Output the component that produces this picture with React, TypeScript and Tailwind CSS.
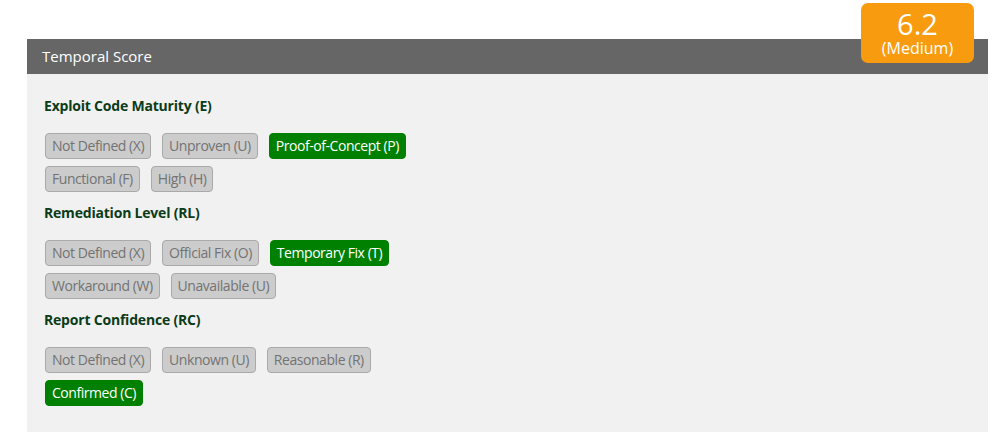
const groups = [
    {
        title: "Exploit Code Maturity (E)",
        rows: [
            [["Not Defined (X)", false], ["Unproven (U)", false], ["Proof-of-Concept (P)", true]],
            [["Functional (F)", false], ["High (H)", false]],
        ],
    },
    {
        title: "Remediation Level (RL)",
        rows: [
            [["Not Defined (X)", false], ["Official Fix (O)", false], ["Temporary Fix (T)", true]],
            [["Workaround (W)", false], ["Unavailable (U)", false]],
        ],
    },
    {
        title: "Report Confidence (RC)",
        rows: [
            [["Not Defined (X)", false], ["Unknown (U)", false], ["Reasonable (R)", false]],
            [["Confirmed (C)", true]],
        ],
    },
] as const;

function Option({ label, active }: { label: string; active: boolean }) {
    return (
        <button
            className={`h-[26px] px-[6px] rounded-[4px] border text-[14px] tracking-[-0.45px] leading-none ${
                active
                    ? "bg-[#008000] border-[#008000] text-white"
                    : "bg-[#cccccc] border-[#a9a9a9] text-[#737373]"
            }`}
        >
            {label}
        </button>
    );
}

export default function App() {
    return (
        <div className="w-[1000px] h-[433px] bg-white relative" style={{ fontFamily: '"Open Sans", sans-serif' }}>
            <div className="absolute left-[861px] top-[3px] w-[113px] h-[60px] rounded-[7px] bg-[#f89b0f] text-white flex flex-col items-center justify-center z-10">
                <span className="text-[29px] leading-[30px]">6.2</span>
                <span className="text-[16px] leading-[18px]">(Medium)</span>
            </div>
            <div className="pt-[39px] pl-[27px]">
                <div className="w-[961px]">
                    <div className="h-[35px] bg-[#666666] flex items-center px-[15px] text-white text-[15px]">
                        Temporal Score
                    </div>
                    <div className="bg-[#f1f1f1] h-[358px] pl-[17px] pt-[22px]">
                        {groups.map((g) => (
                            <div key={g.title} className="mb-[11px]">
                                <div className="text-[14px] tracking-[-0.2px] font-bold text-[#0b3b18] h-[20px] leading-[20px]">
                                    {g.title}
                                </div>
                                <div className="mt-[17px] pl-[1px] flex flex-col gap-[7px]">
                                    {g.rows.map((row, i) => (
                                        <div key={i} className="flex gap-[11px]">
                                            {row.map(([label, active]) => (
                                                <Option key={label} label={label} active={active} />
                                            ))}
                                        </div>
                                    ))}
                                </div>
                            </div>
                        ))}
                    </div>
                </div>
            </div>
        </div>
    );
}
